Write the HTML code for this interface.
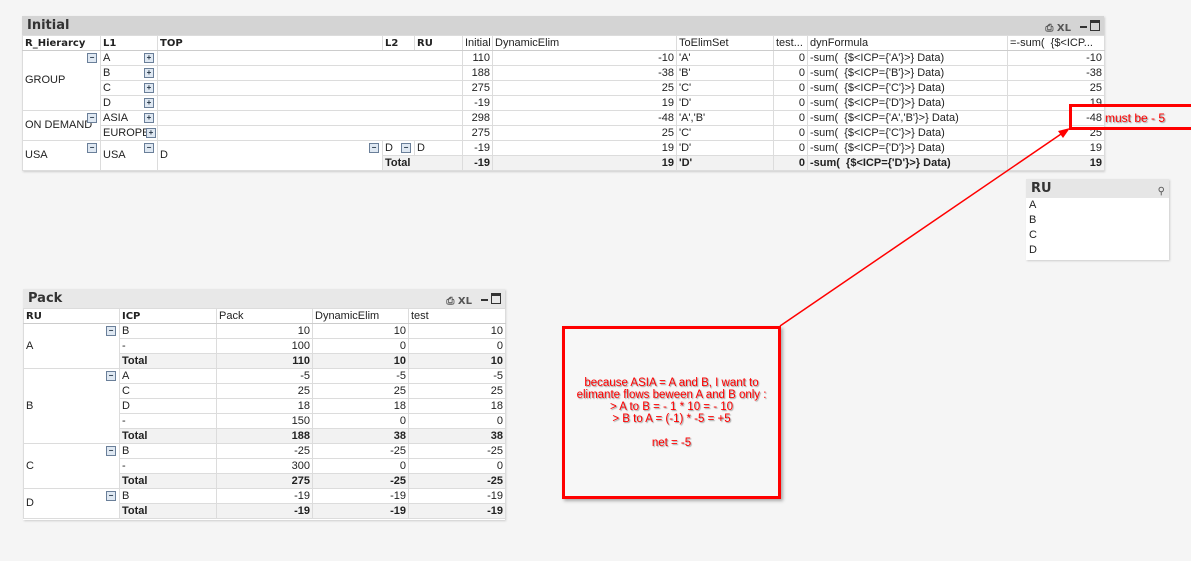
<!DOCTYPE html>
<html><head><meta charset="utf-8"><style>
body{margin:0;width:1191px;height:561px;background:#f5f5f5;font-family:"Liberation Sans","DejaVu Sans",sans-serif;font-size:11px;color:#222;position:relative;overflow:hidden}
.p{position:absolute;background:#fff;box-shadow:1px 1px 2px #ccc}
.tb{height:19px;line-height:19px;padding-left:5px;font-size:13px;font-weight:bold;color:#333;position:relative;font-family:"DejaVu Sans",sans-serif}
table{border-collapse:collapse;table-layout:fixed}
td{height:14px;padding:0 2px;border:1px solid #dcdcdc;white-space:nowrap;overflow:hidden;line-height:13px;position:relative}
.h td{font-weight:normal;background:#fff;border-bottom:1px solid #ccc}
.h td.b{font-weight:bold;font-family:"DejaVu Sans",sans-serif;font-size:10px}
.r{text-align:right}
.t td{font-weight:bold;background:#f2f2f2}
.i{display:inline-block;width:8px;height:8px;border:1px solid #6a7f99;background:#dfe8f2;position:absolute;right:3px;top:2px;font-size:8px;line-height:8px;text-align:center;color:#234;font-weight:bold}
.ic{position:absolute;top:3px;font-size:10px;color:#555}
.e td{border-left:none;border-right:none}
</style></head><body>

<div class="p" style="left:22px;top:16px;width:1082px;height:155px">
<div class="tb" style="background:#d4d4d4">Initial
<span class="ic" style="right:33px">⎙ XL</span><span style="position:absolute;right:17px;top:10px;width:7px;height:2px;background:#333"></span><span style="position:absolute;right:4px;top:4px;width:8px;height:7px;border:1px solid #333;border-top-width:3px"></span></div>
<table style="width:1082px">
<colgroup><col style="width:78px"><col style="width:57px"><col style="width:225px"><col style="width:32px"><col style="width:48px"><col style="width:30px"><col style="width:184px"><col style="width:97px"><col style="width:34px"><col style="width:200px"><col style="width:97px"></colgroup>
<tr class="h"><td class="b">R_Hierarcy</td><td class="b">L1</td><td class="b">TOP</td><td class="b">L2</td><td class="b">RU</td><td>Initial</td><td>DynamicElim</td><td>ToElimSet</td><td>test...</td><td>dynFormula</td><td>=-sum( &nbsp;{$&lt;ICP...</td></tr>
<tr><td rowspan="4">GROUP<span class="i">−</span></td><td>A<span class="i">+</span></td><td colspan="3" style="border-left:none;border-right:none"></td><td class="r">110</td><td class="r">-10</td><td>'A'</td><td class="r">0</td><td>-sum( &nbsp;{$&lt;ICP={'A'}&gt;} Data)</td><td class="r">-10</td></tr>
<tr><td>B<span class="i">+</span></td><td colspan="3" style="border-left:none;border-right:none"></td><td class="r">188</td><td class="r">-38</td><td>'B'</td><td class="r">0</td><td>-sum( &nbsp;{$&lt;ICP={'B'}&gt;} Data)</td><td class="r">-38</td></tr>
<tr><td>C<span class="i">+</span></td><td colspan="3" style="border-left:none;border-right:none"></td><td class="r">275</td><td class="r">25</td><td>'C'</td><td class="r">0</td><td>-sum( &nbsp;{$&lt;ICP={'C'}&gt;} Data)</td><td class="r">25</td></tr>
<tr><td>D<span class="i">+</span></td><td colspan="3" style="border-left:none;border-right:none"></td><td class="r">-19</td><td class="r">19</td><td>'D'</td><td class="r">0</td><td>-sum( &nbsp;{$&lt;ICP={'D'}&gt;} Data)</td><td class="r">19</td></tr>
<tr><td rowspan="2">ON DEMAND<span class="i">−</span></td><td>ASIA<span class="i">+</span></td><td colspan="3" style="border-left:none;border-right:none"></td><td class="r">298</td><td class="r">-48</td><td>'A','B'</td><td class="r">0</td><td>-sum( &nbsp;{$&lt;ICP={'A','B'}&gt;} Data)</td><td class="r">-48</td></tr>
<tr><td>EUROPE<span class="i" style="right:1px">+</span></td><td colspan="3" style="border-left:none;border-right:none"></td><td class="r">275</td><td class="r">25</td><td>'C'</td><td class="r">0</td><td>-sum( &nbsp;{$&lt;ICP={'C'}&gt;} Data)</td><td class="r">25</td></tr>
<tr><td rowspan="2">USA<span class="i">−</span></td><td rowspan="2">USA<span class="i">−</span></td><td rowspan="2">D<span class="i">−</span></td><td>D<span class="i">−</span></td><td>D</td><td class="r">-19</td><td class="r">19</td><td>'D'</td><td class="r">0</td><td>-sum( &nbsp;{$&lt;ICP={'D'}&gt;} Data)</td><td class="r">19</td></tr>
<tr class="t"><td colspan="2">Total</td><td class="r">-19</td><td class="r">19</td><td>'D'</td><td class="r">0</td><td>-sum( &nbsp;{$&lt;ICP={'D'}&gt;} Data)</td><td class="r">19</td></tr>
</table></div>

<div class="p" style="left:1026px;top:179px;width:143px;height:81px">
<div class="tb" style="background:#e6e6e6">RU<span class="ic" style="right:4px">⚲</span></div>
<div style="padding-left:3px;line-height:15px">A<br>B<br>C<br>D</div></div>

<div class="p" style="left:23px;top:289px;width:482px;height:231px">
<div class="tb" style="background:#e8e8e8">Pack
<span class="ic" style="right:33px">⎙ XL</span><span style="position:absolute;right:17px;top:10px;width:7px;height:2px;background:#333"></span><span style="position:absolute;right:4px;top:4px;width:8px;height:7px;border:1px solid #333;border-top-width:3px"></span></div>
<table style="width:482px">
<colgroup><col style="width:96px"><col style="width:97px"><col style="width:96px"><col style="width:96px"><col style="width:97px"></colgroup>
<tr class="h"><td class="b">RU</td><td class="b">ICP</td><td>Pack</td><td>DynamicElim</td><td>test</td></tr>
<tr><td rowspan="3">A<span class="i">−</span></td><td>B</td><td class="r">10</td><td class="r">10</td><td class="r">10</td></tr>
<tr><td>-</td><td class="r">100</td><td class="r">0</td><td class="r">0</td></tr>
<tr class="t"><td>Total</td><td class="r">110</td><td class="r">10</td><td class="r">10</td></tr>
<tr><td rowspan="5">B<span class="i">−</span></td><td>A</td><td class="r">-5</td><td class="r">-5</td><td class="r">-5</td></tr>
<tr><td>C</td><td class="r">25</td><td class="r">25</td><td class="r">25</td></tr>
<tr><td>D</td><td class="r">18</td><td class="r">18</td><td class="r">18</td></tr>
<tr><td>-</td><td class="r">150</td><td class="r">0</td><td class="r">0</td></tr>
<tr class="t"><td>Total</td><td class="r">188</td><td class="r">38</td><td class="r">38</td></tr>
<tr><td rowspan="3">C<span class="i">−</span></td><td>B</td><td class="r">-25</td><td class="r">-25</td><td class="r">-25</td></tr>
<tr><td>-</td><td class="r">300</td><td class="r">0</td><td class="r">0</td></tr>
<tr class="t"><td>Total</td><td class="r">275</td><td class="r">-25</td><td class="r">-25</td></tr>
<tr><td rowspan="2">D<span class="i">−</span></td><td>B</td><td class="r">-19</td><td class="r">-19</td><td class="r">-19</td></tr>
<tr class="t"><td>Total</td><td class="r">-19</td><td class="r">-19</td><td class="r">-19</td></tr>
</table></div>

<div style="position:absolute;left:562px;top:326px;width:213px;height:167px;border:3px solid #f00;background:#f7f7f7;box-shadow:2px 2px 3px #aaa;color:#f00;font-family:'Liberation Sans',sans-serif;font-size:11.5px;text-align:center;line-height:12px;text-shadow:1px 1px 1px #999">
<div style="margin-top:48px">because ASIA = A and B, I want to<br>elimante flows beween A and B only :<br>&gt; A to B = - 1 * 10 = - 10<br>&gt; B to A = (-1) * -5 = +5<br><br>net = -5</div></div>

<div style="position:absolute;left:1069px;top:104px;width:119px;height:20px;border:3px solid #f00;border-right:none;"></div>
<div style="position:absolute;left:1105px;top:111px;color:#f00;font-family:'Liberation Sans',sans-serif;font-size:12px;text-shadow:1px 1px 1px #999">must be - 5</div>

<svg style="position:absolute;left:0;top:0" width="1191" height="561"><line x1="780" y1="326" x2="1064" y2="132" stroke="#f00" stroke-width="1.5"/><polygon points="1070,128 1058,131 1063,138" fill="#f00"/></svg>
</body></html>
